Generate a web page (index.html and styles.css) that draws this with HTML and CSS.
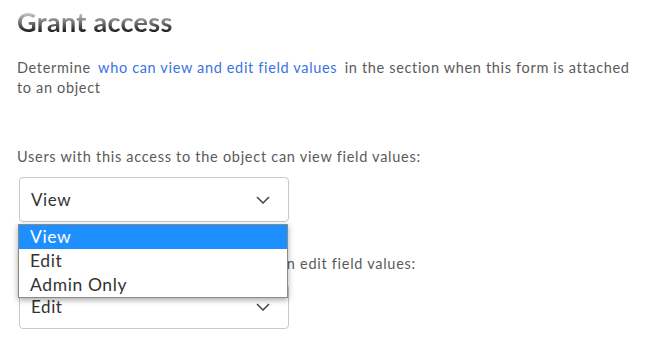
FILE: index.html
```html
<!DOCTYPE html>
<html>
<head>
<meta charset="utf-8">
<link rel="stylesheet" href="styles.css">
</head>
<body>
<div class="page">
  <h1 class="title">Grant access</h1>
  <p class="intro">Determine <a class="link" href="#">who can view and edit field values</a> in the section when this form is attached to an object</p>

  <div class="field">
    <label class="label">Users with this access to the object can view field values:</label>
    <div class="select-wrap">
      <div class="select">
        <span class="value">View</span>
        <svg class="chev" width="14" height="8" viewBox="0 0 14 8"><path d="M1 1l6 6 6-6" fill="none" stroke="#444" stroke-width="1.5"/></svg>
      </div>
      <ul class="menu">
        <li class="opt active">View</li>
        <li class="opt">Edit</li>
        <li class="opt">Admin Only</li>
      </ul>
    </div>
  </div>

  <div class="field">
    <label class="label">Users with this access to the object can edit field values:</label>
    <div class="select-wrap">
      <div class="select">
        <span class="value">Edit</span>
        <svg class="chev" width="14" height="8" viewBox="0 0 14 8"><path d="M1 1l6 6 6-6" fill="none" stroke="#444" stroke-width="1.5"/></svg>
      </div>
    </div>
  </div>
</div>
</body>
</html>
```
FILE: styles.css
```css
* { box-sizing: border-box; }
body {
  margin: 0;
  background: #fff;
  font-family: Lato, "Open Sans", sans-serif;
  color: #555;
  overflow: hidden;
}
.page {
  padding: 5px 16px 0 17px;
  width: 651px;
}
.title {
  margin: 0;
  font-size: 27px;
  font-weight: 700;
  line-height: 34px;
  letter-spacing: 0.3px;
  background: linear-gradient(180deg, #e4e4e4 15%, #1a1a1a 80%);
  -webkit-background-clip: text;
  background-clip: text;
  color: transparent;
  display: inline-block;
}
.intro {
  margin: 19px 0 0;
  font-size: 14.5px;
  line-height: 20px;
  letter-spacing: 0.66px;
  color: #5a5a5a;
}
.link {
  color: #3b73e0;
  text-decoration: none;
  margin: 0 3px;
}
.field {
  margin-top: 49px;
}
.field + .field {
  margin-top: 32px;
}
.label {
  display: block;
  font-size: 14.5px;
  line-height: 20px;
  letter-spacing: 0.72px;
  color: #5a5a5a;
}
.select-wrap {
  position: relative;
  margin-top: 10px;
  margin-left: 2px;
  width: 270px;
}
.select {
  height: 45px;
  border: 1px solid #c8c8c8;
  border-radius: 4px;
  display: flex;
  align-items: center;
  justify-content: space-between;
  padding: 0 18px 0 11px;
  font-size: 17px;
  letter-spacing: 0.6px;
  color: #333;
}
.chev { display: block; }
.menu {
  position: absolute;
  top: 47px;
  left: -1px;
  width: 270px;
  margin: 0;
  padding: 0;
  list-style: none;
  background: #fff;
  border: 1px solid #8a8a8a;
  box-shadow: 0 2px 6px rgba(0,0,0,0.35);
  z-index: 2;
}
.opt {
  height: 24px;
  line-height: 24px;
  padding-left: 11px;
  font-size: 17.5px;
  letter-spacing: 0.6px;
  color: #333;
}
.opt.active {
  background: #1e8fff;
  color: #fff;
}
```
